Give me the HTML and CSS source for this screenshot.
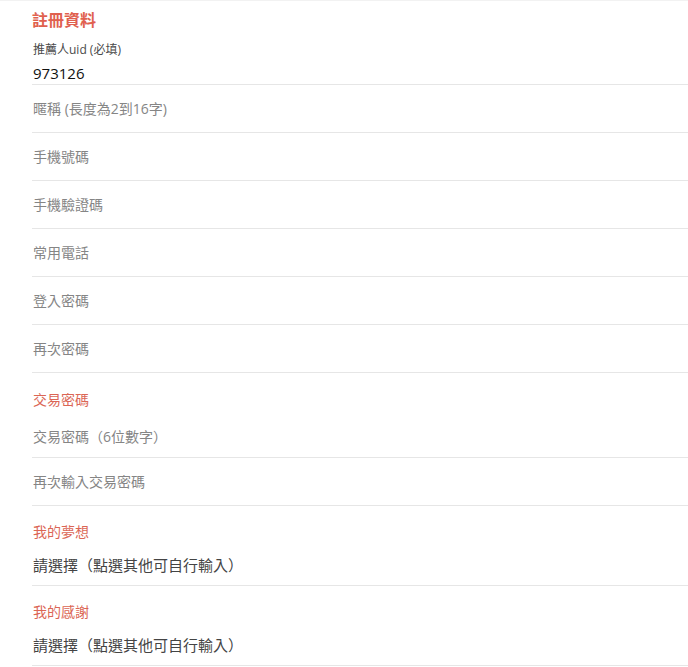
FILE: index.html
```html
<!DOCTYPE html>
<html lang="zh-Hant">
<head>
  <meta charset="UTF-8">
  <meta name="viewport" content="width=device-width, initial-scale=1.0">
  <title>註冊資料</title>
  <link rel="stylesheet" href="styles.css">
</head>
<body>
  <div class="regForm">
    <h2 class="title">註冊資料</h2>

    <div class="field first">
      <label>推薦人uid (必填)</label>
      <input type="text" value="973126">
    </div>
    <div class="field"><input type="text" placeholder="暱稱 (長度為2到16字)"></div>
    <div class="field"><input type="text" placeholder="手機號碼"></div>
    <div class="field"><input type="text" placeholder="手機驗證碼"></div>
    <div class="field"><input type="text" placeholder="常用電話"></div>
    <div class="field"><input type="password" placeholder="登入密碼"></div>
    <div class="field"><input type="password" placeholder="再次密碼"></div>

    <div class="group">
      <div class="groupTitle trade">交易密碼</div>
      <div class="field sub"><input type="password" placeholder="交易密碼（6位數字）"></div>
    </div>
    <div class="field"><input type="password" placeholder="再次輸入交易密碼"></div>

    <div class="group">
      <div class="groupTitle">我的夢想</div>
      <div class="field pick">請選擇（點選其他可自行輸入）</div>
    </div>
    <div class="group">
      <div class="groupTitle">我的感謝</div>
      <div class="field pick">請選擇（點選其他可自行輸入）</div>
    </div>
  </div>
</body>
</html>
```

FILE: styles.css
```css
* {
  box-sizing: border-box;
}
body {
  margin: 0;
  background: #fff;
  font-family: "Open Sans", "Noto Sans CJK TC", sans-serif;
}
.regForm {
  padding-left: 32px;
  border-top: 1px solid #f2f2f2;
}
.regForm .title {
  margin: 0;
  padding-top: 8px;
  font-size: 16px;
  line-height: 22px;
  font-weight: bold;
  color: #e0604e;
}
.field {
  border-bottom: 1px solid #e6e6e6;
}
.field input {
  display: block;
  width: 100%;
  height: 47px;
  padding: 0 0 0 1px;
  border: none;
  outline: none;
  background: transparent;
  font-family: "Open Sans", "Noto Sans CJK TC", sans-serif;
  font-size: 14px;
  color: #222;
}
.field input::placeholder {
  color: #858585;
}
.field.first {
  padding-top: 11px;
}
.field.first label {
  display: block;
  padding-left: 1px;
  font-size: 12px;
  line-height: 16px;
  color: #4a4a4a;
}
.field.first input {
  height: 20px;
  margin-top: 5px;
  margin-bottom: 1px;
  font-size: 15px;
  line-height: 20px;
  color: #111;
}
.groupTitle {
  padding: 16px 0 0 1px;
  font-size: 14px;
  line-height: 20px;
  color: #db6655;
}
.groupTitle.trade {
  padding-top: 17px;
}
.field.sub input {
  height: 47px;
  padding-top: 5px;
}
.field.pick {
  padding: 12px 0 9px 1px;
  font-size: 15px;
  line-height: 22px;
  color: #444;
}
```
